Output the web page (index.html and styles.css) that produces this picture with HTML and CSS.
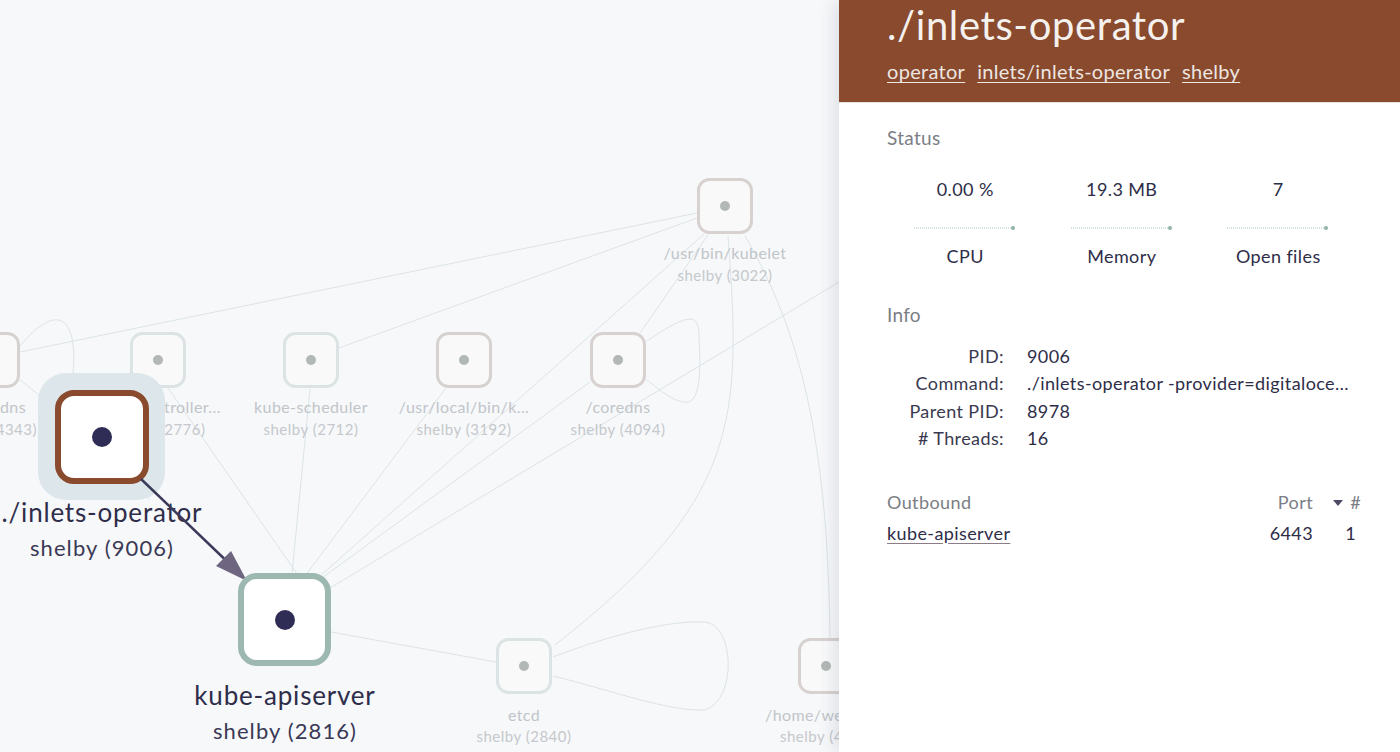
FILE: index.html
```html
<!DOCTYPE html>
<html lang="en">
<head>
<meta charset="utf-8">
<title>inlets-operator</title>
<link rel="stylesheet" href="styles.css">
</head>
<body>
<div class="app">
  <main class="canvas">
    <svg class="graph" width="839" height="752" viewBox="0 0 839 752" xmlns="http://www.w3.org/2000/svg">
      <g class="edges">
        <path d="M20,352 L697,213"/>
        <path d="M339,348 L697,218"/>
        <path d="M20,346 C58,300 78,318 73,373"/>
        <path d="M20,380 C60,410 120,470 150,500"/>
        <path d="M168,388 L300,578"/>
        <path d="M310,389 L292,574"/>
        <path d="M446,388 L305,576"/>
        <path d="M590,382 L322,578"/>
        <path d="M704,234 L318,578"/>
        <path d="M839,282 L330,588"/>
        <path d="M708,235 L640,333"/>
        <path d="M647,341 C690,312 700,312 699,340 C701,370 700,400 688,402 C676,404 660,390 647,380"/>
        <path d="M728,236 C742,420 740,500 555,645"/>
        <path d="M745,236 C800,330 828,440 830,640"/>
        <path d="M331,632 L496,662"/>
        <path d="M553,657 C610,635 670,620 705,622 C735,625 737,700 705,710 C670,712 610,690 553,676"/>
      </g>
      <g class="node faded warm">
        <rect x="-36.5" y="333.5" width="55" height="53" rx="11"/>
        <text class="n-name edge-end" x="26" y="413">dns</text>
        <text class="n-sub edge-end" x="37" y="435">4343)</text>
      </g>
      <g class="node faded cool">
        <rect x="131.5" y="333.5" width="53" height="53" rx="11"/>
        <circle cx="158" cy="360" r="5"/>
        <text class="n-name" x="158" y="413">kube-controller...</text>
        <text class="n-sub" x="158" y="435">shelby (2776)</text>
      </g>
      <g class="node faded cool">
        <rect x="284.5" y="333.5" width="53" height="53" rx="11"/>
        <circle cx="311" cy="360" r="5"/>
        <text class="n-name" x="311" y="413">kube-scheduler</text>
        <text class="n-sub" x="311" y="435">shelby (2712)</text>
      </g>
      <g class="node faded warm">
        <rect x="437.5" y="333.5" width="53" height="53" rx="11"/>
        <circle cx="464" cy="360" r="5"/>
        <text class="n-name" x="464" y="413">/usr/local/bin/k...</text>
        <text class="n-sub" x="464" y="435">shelby (3192)</text>
      </g>
      <g class="node faded warm">
        <rect x="591.5" y="333.5" width="53" height="53" rx="11"/>
        <circle cx="618" cy="360" r="5"/>
        <text class="n-name" x="618" y="413">/coredns</text>
        <text class="n-sub" x="618" y="435">shelby (4094)</text>
      </g>
      <g class="node faded warm">
        <rect x="698.5" y="179.5" width="53" height="53" rx="11"/>
        <circle cx="725" cy="206" r="5"/>
        <text class="n-name" x="725" y="259">/usr/bin/kubelet</text>
        <text class="n-sub" x="725" y="281">shelby (3022)</text>
      </g>
      <g class="node faded cool">
        <rect x="497.5" y="639.5" width="53" height="53" rx="11"/>
        <circle cx="524" cy="666" r="5"/>
        <text class="n-name" x="524" y="721">etcd</text>
        <text class="n-sub" x="524" y="742">shelby (2840)</text>
      </g>
      <g class="node faded warm">
        <rect x="799.5" y="639.5" width="53" height="53" rx="11"/>
        <circle cx="826" cy="666" r="5"/>
        <text class="n-name edge-start" x="765" y="721">/home/we</text>
        <text class="n-sub edge-start" x="780" y="742">shelby (4</text>
      </g>
      <g class="node main">
        <rect class="halo" x="38" y="373" width="127" height="127" rx="28"/>
        <rect class="box brown" x="58" y="393" width="88" height="88" rx="16"/>
        <circle cx="102" cy="437" r="10"/>
        <text class="m-name" x="102" y="522">./inlets-operator</text>
        <text class="m-sub" x="102" y="556">shelby (9006)</text>
      </g>
      <g class="edge-main">
        <path d="M141,479 L236,570"/>
        <polygon points="247,581 216,566 231,551"/>
      </g>
      <g class="node main">
        <rect class="box green" x="241" y="576" width="87" height="87" rx="16"/>
        <circle cx="285" cy="620" r="10"/>
        <text class="m-name" x="285" y="705">kube-apiserver</text>
        <text class="m-sub" x="285" y="739">shelby (2816)</text>
      </g>
    </svg>
  </main>

  <aside class="panel">
    <header class="panel-head">
      <h1 class="panel-title">./inlets-operator</h1>
      <nav class="tags">
        <a href="#">operator</a>
        <a href="#">inlets/inlets-operator</a>
        <a href="#">shelby</a>
      </nav>
    </header>

    <section class="section status">
      <h2 class="section-title">Status</h2>
      <div class="metrics">
        <div class="metric">
          <div class="metric-value">0.00 %</div>
          <svg class="spark" width="102" height="8" viewBox="0 0 102 8"><line x1="0" y1="4" x2="99" y2="4"/><circle cx="99" cy="4" r="2"/></svg>
          <div class="metric-label">CPU</div>
        </div>
        <div class="metric">
          <div class="metric-value">19.3 MB</div>
          <svg class="spark" width="102" height="8" viewBox="0 0 102 8"><line x1="0" y1="4" x2="99" y2="4"/><circle cx="99" cy="4" r="2"/></svg>
          <div class="metric-label">Memory</div>
        </div>
        <div class="metric">
          <div class="metric-value">7</div>
          <svg class="spark" width="102" height="8" viewBox="0 0 102 8"><line x1="0" y1="4" x2="99" y2="4"/><circle cx="99" cy="4" r="2"/></svg>
          <div class="metric-label">Open files</div>
        </div>
      </div>
    </section>

    <section class="section info">
      <h2 class="section-title">Info</h2>
      <dl class="info-grid">
        <dt>PID:</dt><dd>9006</dd>
        <dt>Command:</dt><dd>./inlets-operator -provider=digitalocean -access-key-file=/var/secrets/inlets/inlets-access-key</dd>
        <dt>Parent PID:</dt><dd>8978</dd>
        <dt># Threads:</dt><dd>16</dd>
      </dl>
    </section>

    <section class="section outbound">
      <table class="conn">
        <thead>
          <tr><th class="c-name">Outbound</th><th class="c-port">Port</th><th class="c-count"><span class="sort"></span>#</th></tr>
        </thead>
        <tbody>
          <tr><td class="c-name"><a href="#">kube-apiserver</a></td><td class="c-port">6443</td><td class="c-count c-num">1</td></tr>
        </tbody>
      </table>
    </section>
  </aside>
</div>
</body>
</html>
```

FILE: styles.css
```css
* { box-sizing: border-box; }
html, body { margin: 0; padding: 0; }
body {
  font-family: "Lato", "Open Sans", "Liberation Sans", sans-serif;
  color: #2e2d48;
  background: #f7f8fa;
  overflow: hidden;
}
.app {
  display: flex;
  width: 1400px;
  height: 752px;
}
.canvas {
  flex: 0 0 839px;
  height: 752px;
  overflow: hidden;
  background: #f7f8fa;
}
.graph { display: block; overflow: visible; }
.edges path {
  fill: none;
  stroke: #dbe4e7;
  stroke-width: 1;
}
.node.faded rect { fill: #f9f9fa; stroke-width: 3; }
.node.faded.warm rect { stroke: #d7d1d0; }
.node.faded.cool rect { stroke: #dce3e5; }
.node.faded circle { fill: #b2b8b5; }
.node text { text-anchor: middle; }
.node text.edge-end { text-anchor: end; }
.node text.edge-start { text-anchor: start; }
.n-name { font-size: 16px; letter-spacing: 0.4px; fill: #c1c5c9; }
.n-sub { font-size: 15px; letter-spacing: 0.5px; fill: #c5c8cc; }
.node.main .halo { fill: #dde6ea; }
.node.main .box { fill: #ffffff; stroke-width: 6; }
.node.main .box.brown { stroke: #8a4a2d; }
.node.main .box.green { stroke: #9cb8b0; }
.node.main circle { fill: #2f2d55; }
.m-name { font-size: 26px; letter-spacing: 0.8px; fill: #2e2d4a; }
.m-sub { font-size: 22px; letter-spacing: 1.1px; fill: #3a3956; }
.edge-main path { stroke: #3c3a5a; stroke-width: 2.5; fill: none; }
.edge-main polygon { fill: #6e6580; }

.panel {
  flex: 0 0 561px;
  height: 752px;
  background: #ffffff;
  box-shadow: -6px 0 14px rgba(60, 70, 90, 0.12);
  position: relative;
  z-index: 1;
}
.panel-head {
  background: #894a2d;
  height: 103px;
  padding: 1px 48px 0 48px;
  border-bottom: 1px solid #e2e2e4;
}
.panel-title {
  margin: 0;
  font-size: 40px;
  line-height: 48px;
  font-weight: 400;
  letter-spacing: 0.6px;
  color: #f5f1ee;
}
.tags {
  display: flex;
  gap: 12px;
  margin-top: 10px;
}
.tags a {
  font-size: 20px;
  line-height: 24px;
  letter-spacing: 0.3px;
  color: #ede6e2;
  text-decoration: underline;
  text-decoration-thickness: 1px;
  text-underline-offset: 3px;
}
.section { padding: 0 40px 0 48px; }
.section-title {
  margin: 0;
  font-size: 19px;
  line-height: 24px;
  font-weight: 400;
  letter-spacing: 0.3px;
  color: #7b7e85;
}
.status { padding-top: 23px; }
.metrics {
  display: grid;
  grid-template-columns: repeat(3, 156.5px);
  margin-top: 27px;
}
.metric {
  display: flex;
  flex-direction: column;
  align-items: center;
}
.metric-value, .metric-label {
  font-size: 18px;
  line-height: 24px;
  letter-spacing: 0.4px;
  color: #2e2d48;
}
.spark { display: block; margin: 23px 0 12px; }
.spark line { stroke: #a9c3bb; stroke-width: 1; stroke-dasharray: 1 1; }
.spark circle { fill: #8fb3a7; }
.info { padding-top: 35px; }
.info-grid {
  display: grid;
  grid-template-columns: 117px 1fr;
  column-gap: 23px;
  margin: 15.5px 0 0;
  font-size: 18px;
  line-height: 27.5px;
  letter-spacing: 0.4px;
}
.info-grid dt { text-align: right; color: #3a3950; }
.info-grid dd {
  margin: 0;
  color: #2e2d48;
  white-space: nowrap;
  overflow: hidden;
  text-overflow: ellipsis;
  max-width: 328px;
}
.outbound { padding-top: 37px; }
.conn {
  width: 474px;
  border-collapse: collapse;
  font-size: 18px;
  letter-spacing: 0.4px;
}
.conn th {
  font-weight: 400;
  color: #7b7e85;
  line-height: 24px;
  padding: 0 0 7px;
}
.conn td { line-height: 24px; padding: 0; color: #2e2d48; }
.c-name { text-align: left; }
.c-port { text-align: right; width: 80px; }
.c-count { text-align: right; width: 48px; }
.c-num { padding-right: 5px !important; }
.conn a {
  color: #2e2d48;
  text-decoration: underline;
  text-decoration-color: #8b7c88;
  text-underline-offset: 3px;
}
.sort {
  display: inline-block;
  width: 0;
  height: 0;
  border-left: 5px solid transparent;
  border-right: 5px solid transparent;
  border-top: 6px solid #4d4a66;
  margin-right: 7px;
  vertical-align: 3px;
}
```
